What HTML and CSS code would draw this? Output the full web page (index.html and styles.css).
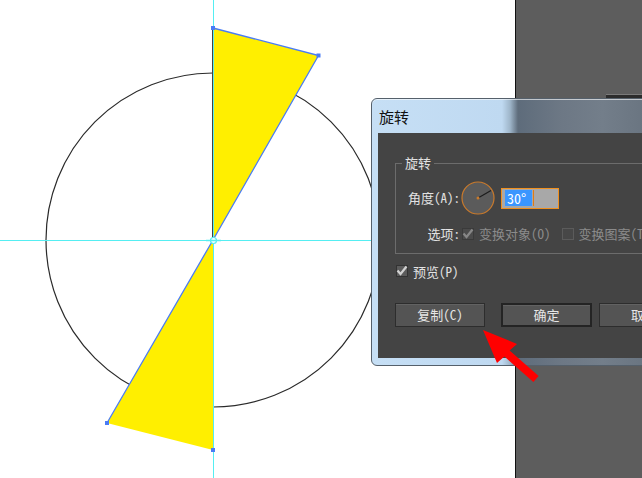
FILE: index.html
```html
<!DOCTYPE html>
<html lang="zh-CN">
<head>
    <meta charset="UTF-8">
    <meta name="viewport" content="width=device-width, initial-scale=1.0">
    <title>旋转</title>
    <link rel="stylesheet" href="styles.css">
</head>
<body>
<div class="stage">
    <!-- artboard -->
    <div class="canvas">
        <svg class="artwork" width="515" height="478" viewBox="0 0 515 478">
            <circle cx="213" cy="240" r="167" fill="none" stroke="#2a2a2a" stroke-width="1.2"/>
            <polygon points="213,28 318.5,55.5 213,240" fill="#ffef00"/>
            <polygon points="213,240 107,423 213,450" fill="#ffef00"/>
            <line x1="212.5" y1="28" x2="212.5" y2="240" stroke="#444" stroke-width="1"/>
            <path d="M213 28 L318.5 55.5 L213 240 L107 423" fill="none" stroke="#4a7cf5" stroke-width="1.3"/>
            <!-- guides -->
            <line x1="213.5" y1="0" x2="213.5" y2="478" stroke="#55eef2" stroke-width="1"/>
            <line x1="0" y1="240.5" x2="515" y2="240.5" stroke="#55eef2" stroke-width="1"/>
            <!-- anchors -->
            <rect x="211" y="26" width="4" height="4" fill="#4a7cf5"/>
            <rect x="316.5" y="53.5" width="4" height="4" fill="#4a7cf5"/>
            <rect x="105" y="421" width="4" height="4" fill="#4a7cf5"/>
            <rect x="211" y="448" width="4" height="4" fill="#4a7cf5"/>
            <!-- rotate origin -->
            <circle cx="213.5" cy="240.5" r="3" fill="#fff" stroke="#55eef2" stroke-width="1.2"/>
            <line x1="206" y1="240.5" x2="221" y2="240.5" stroke="#55eef2" stroke-width="1.5"/>
        </svg>
    </div>
    <div class="panel">
        <div class="panel-edge"></div>
    </div>

    <!-- rotate dialog -->
    <div class="dialog">
        <div class="dialog-title">旋转</div>
        <div class="dialog-body">
            <fieldset class="group">
                <legend>旋转</legend>
                <div class="field-grid">
                    <span class="field-label">角度(A):</span>
                    <div class="field-value">
                        <div class="dial">
                            <svg width="34" height="34" viewBox="0 0 34 34">
                                <circle cx="17" cy="17" r="16" fill="#5b5b5b" stroke="#c97a2c" stroke-width="1.2"/>
                                <line x1="17" y1="17" x2="30" y2="9.5" stroke="#1c1c1c" stroke-width="1.2"/>
                                <circle cx="17" cy="17" r="1.5" fill="#c97a2c"/>
                            </svg>
                        </div>
                        <div class="angle-input">
                            <span class="selected">30°</span><span class="caret"></span>
                        </div>
                    </div>
                    <span class="field-label">选项:</span>
                    <div class="field-value options">
                        <span class="check is-disabled">
                            <svg width="12" height="12" viewBox="0 0 12 12"><path d="M1.5 5.5 L4.5 9 L10.5 1.5" fill="none" stroke="#878787" stroke-width="2.2"/></svg>
                        </span>
                        <span class="muted">变换对象(O)</span>
                        <span class="check is-disabled is-empty"></span>
                        <span class="muted">变换图案(T)</span>
                    </div>
                </div>
            </fieldset>

            <div class="preview-row">
                <span class="check">
                    <svg width="12" height="12" viewBox="0 0 12 12"><path d="M1.5 5.5 L4.5 9 L10.5 1.5" fill="none" stroke="#d2d2d2" stroke-width="2.2"/></svg>
                </span>
                <span>预览(P)</span>
            </div>

            <div class="button-row">
                <button class="btn btn-copy">复制(C)</button>
                <button class="btn btn-default">确定</button>
                <button class="btn btn-cancel">取消</button>
            </div>
        </div>
    </div>

    <svg class="pointer-arrow" width="642" height="478" viewBox="0 0 642 478">
        <polygon points="483,330 517,344 509.6,350.5 538.6,376 533.4,382 504.4,356.5 497,363" fill="#ff0000"/>
    </svg>
</div>
</body>
</html>
```

FILE: styles.css
```css
body {
    margin: 0;
    font-family: "Noto Sans Mono CJK SC", "Noto Sans CJK SC", sans-serif;
}

.stage {
    position: relative;
    display: flex;
    width: 642px;
    height: 478px;
    overflow: hidden;
    background: #fff;
}

.canvas {
    flex: none;
    width: 515px;
}

.artwork {
    display: block;
}

.panel {
    flex: 1;
    border-left: 1px solid #111;
    background: #5d5d5d;
}

.panel-edge {
    margin: 94px 0 0 90px;
    height: 3px;
    background: #2c2c2c;
    border-top: 1px solid #7a7a7a;
}

/* Dialog window */
.dialog {
    position: absolute;
    left: 371px;
    top: 98px;
    width: 300px;
    height: 268px;
    box-sizing: border-box;
    display: flex;
    flex-direction: column;
    padding: 0 6px 7px 6px;
    border: 1px solid #55606b;
    border-radius: 6px;
    background: linear-gradient(to right, #c6dff5 0, #bfd9f1 130px, #9fb6ca 138px, #5e6c7b 146px, #6d7885 190px, #737e8a 230px, #646f7b 300px);
    box-shadow: inset 0 1px 0 rgba(255, 255, 255, 0.6);
}

.dialog-title {
    height: 34px;
    display: flex;
    align-items: center;
    padding-left: 1px;
    font-family: "Noto Sans CJK SC", sans-serif;
    font-size: 15px;
    color: #111;
}

.dialog-body {
    flex: 1;
    background: #444;
    color: #e2e2e2;
    font-size: 13px;
}

.group {
    box-sizing: border-box;
    height: 100px;
    margin: 21px 0 0 17px;
    padding: 9px 0 0 6px;
    border: 1px solid #6c6c6c;
}

.group legend {
    padding: 0 3px;
    line-height: 18px;
    color: #e2e2e2;
}

.field-grid {
    display: grid;
    grid-template-columns: 58px auto;
    column-gap: 2px;
    row-gap: 10px;
    align-items: center;
}

.field-label {
    justify-self: end;
    line-height: 18px;
    white-space: nowrap;
}

.field-value {
    display: flex;
    align-items: center;
    white-space: nowrap;
}

.dial {
    width: 34px;
    height: 34px;
    margin-left: -1px;
}

.dial svg {
    display: block;
}

.angle-input {
    box-sizing: border-box;
    width: 58px;
    height: 21px;
    margin-left: 6px;
    display: flex;
    align-items: center;
    padding-left: 3px;
    border: 1px solid #f0901e;
    background: #a8a8a8;
}

.selected {
    padding: 0 6px 0 2px;
    line-height: 16px;
    font-size: 14px;
    background: #3a96ff;
    color: #fff;
}

.caret {
    width: 1px;
    height: 16px;
    background: #e07a14;
    margin-left: 1px;
}

.check {
    box-sizing: border-box;
    width: 12px;
    height: 12px;
    display: inline-flex;
    align-items: center;
    justify-content: center;
    border: 1px solid #333;
    background: #5c5c5c;
    overflow: visible;
}

.check svg {
    flex: none;
}

.check.is-disabled {
    background: #4b4b4b;
    border-color: #3a3a3a;
}

.check.is-empty {
    background: #474747;
    border-color: #5b5b5b;
}

.options .check {
    margin-right: 5px;
}

.options .muted + .check {
    margin-left: 11px;
}

.muted {
    color: #8b8b8b;
    line-height: 18px;
}

.preview-row {
    display: flex;
    align-items: center;
    gap: 5px;
    height: 18px;
    margin: 8px 0 0 18px;
}

.button-row {
    display: flex;
    margin: 23px 0 0 17px;
}

.btn {
    box-sizing: border-box;
    flex: none;
    width: 90px;
    height: 24px;
    padding: 0 0 1px;
    border: 1px solid #2d2d2d;
    background: #545454;
    box-shadow: inset 0 1px 0 #626262;
    color: #e6e6e6;
    font-family: inherit;
    font-size: 13px;
}

.btn-default {
    width: 91px;
    margin-left: 16px;
    border: 2px solid #242424;
}

.btn-cancel {
    margin-left: 7px;
}

.pointer-arrow {
    position: absolute;
    left: 0;
    top: 0;
    pointer-events: none;
}
```
